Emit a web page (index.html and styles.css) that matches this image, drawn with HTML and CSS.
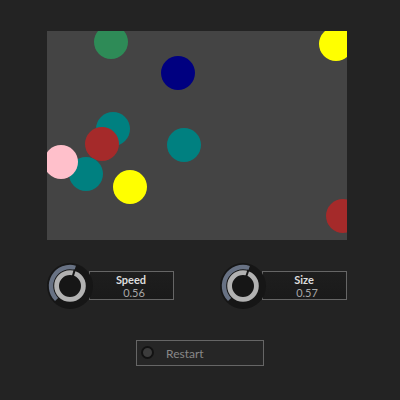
FILE: index.html
```html
<!DOCTYPE html>
<html>
<head>
<meta charset="utf-8">
<link rel="stylesheet" href="styles.css">
</head>
<body>
<div class="app">
  <div class="stage">
    <span class="ball seagreen" style="left:46.7px;top:-6px"></span>
    <span class="ball navy" style="left:114px;top:24.7px"></span>
    <span class="ball yellow" style="left:272px;top:-4px"></span>
    <span class="ball teal" style="left:48.7px;top:80.7px"></span>
    <span class="ball brown" style="left:38px;top:96px"></span>
    <span class="ball teal" style="left:120px;top:96.7px"></span>
    <span class="ball teal" style="left:22px;top:126px"></span>
    <span class="ball pink" style="left:-3px;top:114px"></span>
    <span class="ball yellow" style="left:66px;top:138.7px"></span>
    <span class="ball brown" style="left:278.7px;top:168px"></span>
  </div>

  <div class="controls">
    <div class="control">
      <svg class="knob" width="46" height="46" viewBox="0 0 46 46">
        <circle cx="23" cy="23" r="23" fill="#161616"/>
        <path d="M9.565 36.435 A19 19 0 0 1 28.30 4.76" fill="none" stroke="#687284" stroke-width="4.4"/>
        <circle cx="23" cy="23" r="13.4" fill="none" stroke="#b2b2b2" stroke-width="4.8"/>
        <line x1="25.8" y1="13.4" x2="27.8" y2="6.6" stroke="#161616" stroke-width="2"/>
      </svg>
      <div class="readout">
        <span class="label">Speed</span>
        <span class="value">0.56</span>
      </div>
    </div>
    <div class="control second">
      <svg class="knob" width="46" height="46" viewBox="0 0 46 46">
        <circle cx="23" cy="23" r="23" fill="#161616"/>
        <path d="M9.565 36.435 A19 19 0 0 1 29.16 5.03" fill="none" stroke="#687284" stroke-width="4.4"/>
        <circle cx="23" cy="23" r="13.4" fill="none" stroke="#b2b2b2" stroke-width="4.8"/>
        <line x1="26.2" y1="13.5" x2="28.5" y2="6.9" stroke="#161616" stroke-width="2"/>
      </svg>
      <div class="readout">
        <span class="label">Size</span>
        <span class="value">0.57</span>
      </div>
    </div>
  </div>

  <button class="restart"><span class="led"></span><span class="restart-text">Restart</span></button>
</div>
</body>
</html>
```

FILE: styles.css
```css
html, body {
  margin: 0;
  padding: 0;
  background: #232323;
  width: 400px;
  height: 400px;
  overflow: hidden;
  font-family: "Lato", "Open Sans", sans-serif;
}

.app {
  display: flex;
  flex-direction: column;
  padding-top: 31px;
  padding-left: 47px;
}

.stage {
  position: relative;
  width: 300px;
  height: 209px;
  background: #444444;
  overflow: hidden;
}

.ball {
  position: absolute;
  width: 34px;
  height: 34px;
  border-radius: 50%;
}

.seagreen { background: #2e8b57; }
.navy { background: #000080; }
.yellow { background: #ffff00; }
.teal { background: #008080; }
.brown { background: #a52a2a; }
.pink { background: #ffc0cb; }

.controls {
  display: flex;
  align-items: center;
  margin-top: 23px;
  margin-left: -0.5px;
  height: 46px;
}

.control {
  display: flex;
  align-items: center;
}

.control.second {
  margin-left: 46px;
}

.knob {
  display: block;
  position: relative;
  z-index: 1;
  flex: none;
}

.readout {
  box-sizing: border-box;
  width: 85px;
  height: 29px;
  margin-left: -4px;
  margin-top: -1px;
  padding-top: 1px;
  border: 1px solid #666666;
  background: linear-gradient(#1e1e1e, #1a1a1a);
  display: flex;
  flex-direction: column;
  align-items: center;
  justify-content: center;
  line-height: 13.2px;
}

.label {
  color: #dddddd;
  font-size: 11px;
  font-weight: 700;
}

.value {
  color: #a8a8a8;
  font-size: 11px;
  padding-left: 6px;
}

.restart {
  box-sizing: border-box;
  margin: 31px 0 0 89px;
  width: 128px;
  height: 26px;
  padding: 0 0 0 4px;
  border: 1px solid #666666;
  background: #262626;
  display: flex;
  align-items: center;
  font-family: inherit;
  cursor: pointer;
}

.led {
  box-sizing: border-box;
  width: 13px;
  height: 13px;
  border-radius: 50%;
  border: 2.5px solid #121212;
  background: #3c3c3c;
  margin-top: -1px;
}

.restart-text {
  margin-left: 12px;
  color: #888888;
  font-size: 12px;
}
```
